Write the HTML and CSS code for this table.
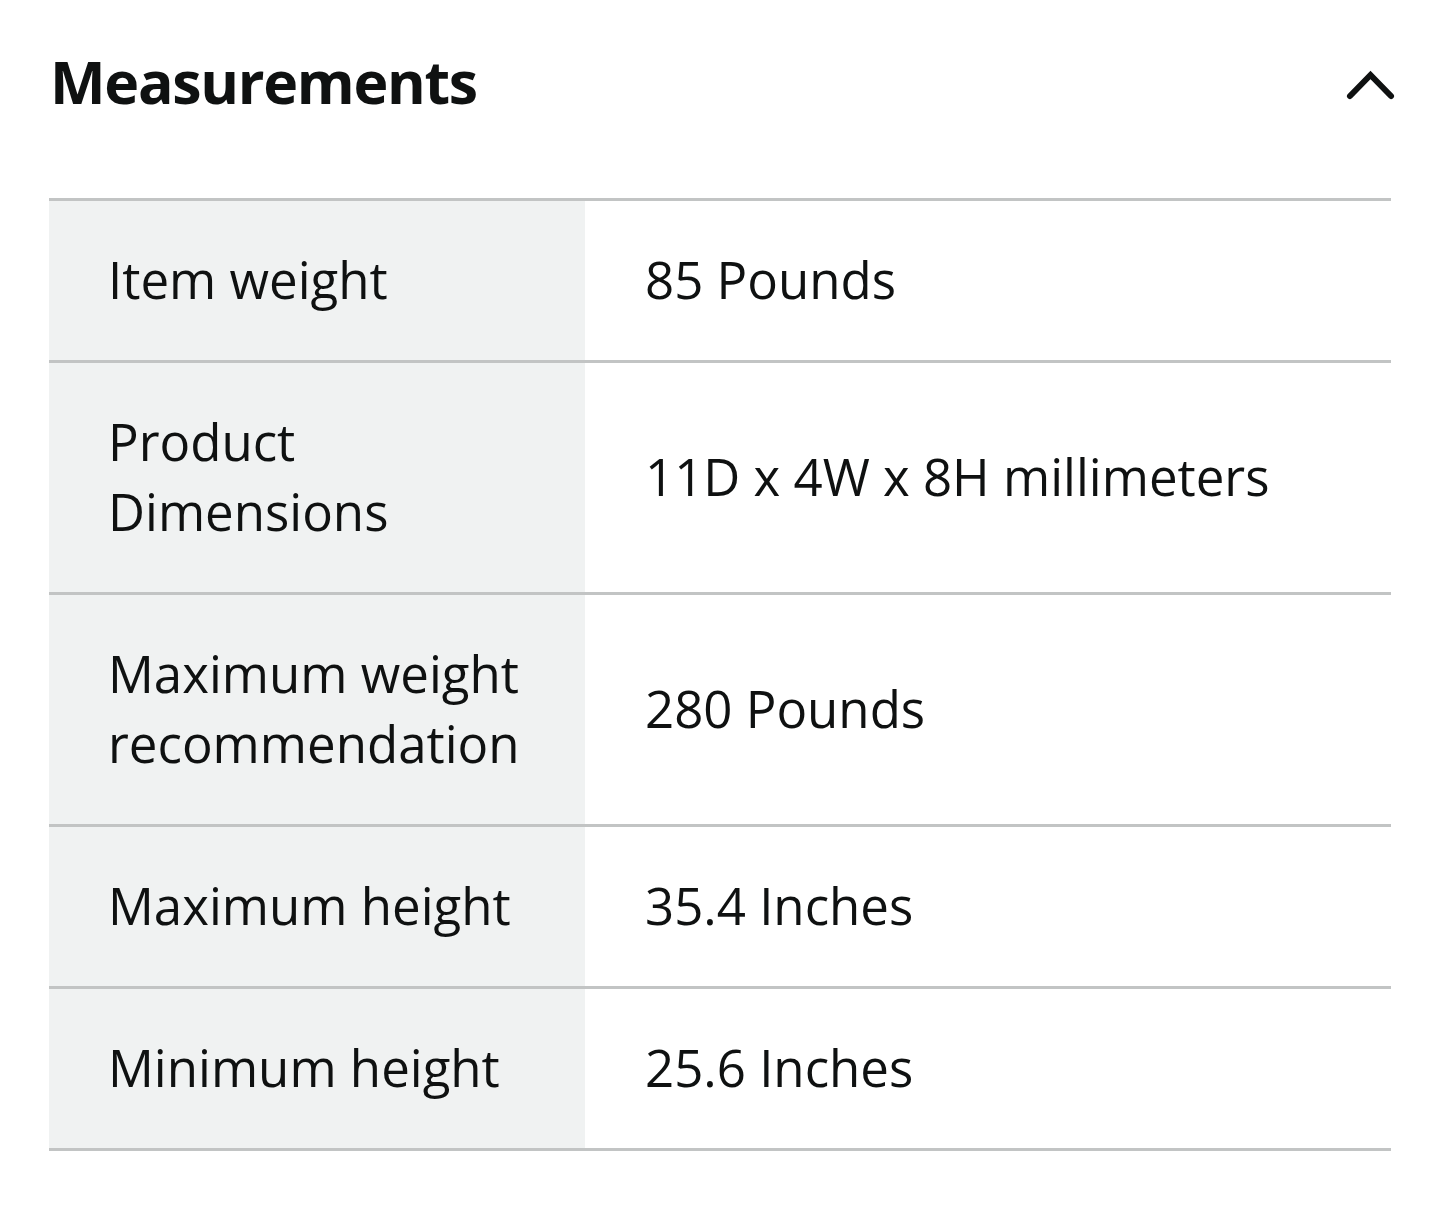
FILE: index.html
```html
<!DOCTYPE html>
<html lang="en">
<head>
<meta charset="utf-8">
<title>Measurements</title>
<link rel="stylesheet" href="styles.css">
</head>
<body>
<section class="panel">
  <header class="panel-head">
    <h2 class="title">Measurements</h2>
    <svg class="chevron" width="56" height="40" viewBox="0 0 56 40" aria-hidden="true">
      <polyline points="10,30 30.5,9 51,30" fill="none" stroke="#0f1111" stroke-width="6" stroke-linecap="round" stroke-linejoin="miter"/>
    </svg>
  </header>
  <div class="table">
    <div class="row">
      <div class="label">Item weight</div>
      <div class="value">85 Pounds</div>
    </div>
    <div class="row">
      <div class="label">Product<br>Dimensions</div>
      <div class="value">11D x 4W x 8H millimeters</div>
    </div>
    <div class="row">
      <div class="label">Maximum weight<br>recommendation</div>
      <div class="value">280 Pounds</div>
    </div>
    <div class="row">
      <div class="label">Maximum height</div>
      <div class="value">35.4 Inches</div>
    </div>
    <div class="row">
      <div class="label">Minimum height</div>
      <div class="value">25.6 Inches</div>
    </div>
  </div>
</section>
</body>
</html>
```

FILE: styles.css
```css
html, body {
  margin: 0;
  padding: 0;
  background: #ffffff;
}

body {
  font-family: "Open Sans", "Noto Sans", "Liberation Sans", sans-serif;
  color: #0f1111;
}

.panel {
  width: 1342px;
  margin-left: 49px;
}

.panel-head {
  display: flex;
  justify-content: space-between;
  align-items: flex-start;
  height: 198px;
}

.title {
  margin: 46px 0 0 1px;
  font-size: 59px;
  font-weight: 700;
  line-height: 71px;
  letter-spacing: -1.3px;
}

.chevron {
  margin-top: 66px;
  margin-right: -5px;
}

.table {
  border-top: 3px solid #c2c4c4;
}

.row {
  display: grid;
  grid-template-columns: 536px 1fr;
  border-bottom: 3px solid #c2c4c4;
}

.label,
.value {
  font-size: 51px;
  line-height: 70px;
  padding: 43px 0 46px 59px;
}

.label {
  background: #f0f2f2;
}

.value {
  display: flex;
  align-items: center;
  padding-left: 60px;
}
```
